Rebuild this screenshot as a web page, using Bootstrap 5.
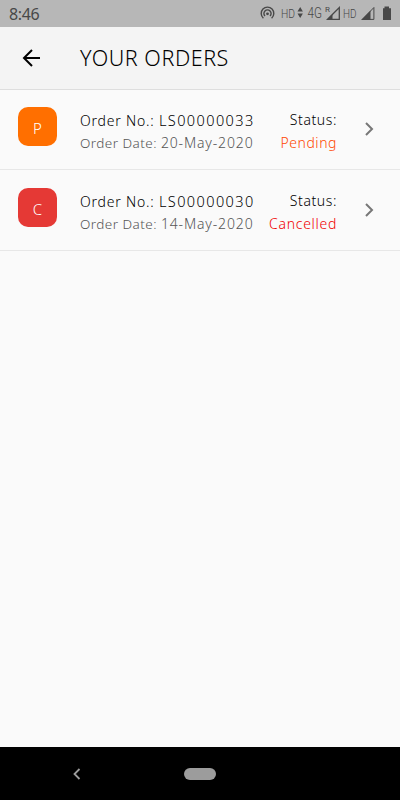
<!DOCTYPE html>
<html lang="en">
<head>
<meta charset="utf-8">
<meta name="viewport" content="width=device-width, initial-scale=1">
<title>Your Orders</title>
<link href="https://cdn.jsdelivr.net/npm/bootstrap@5.3.0/dist/css/bootstrap.min.css" rel="stylesheet">
<style>
body{background:#fafafa;font-family:"Noto Sans","Open Sans",sans-serif;font-weight:300;color:#000;height:800px;overflow:hidden}
.statusbar{height:27px;background:#b7b7b7;color:#484848;padding:0 9px;font-family:Roboto,sans-serif;font-weight:400}
.clock{font-size:16px;line-height:28px;font-family:"Noto Sans",sans-serif;letter-spacing:-.4px}
.appbar{height:63px;background:#f4f4f4;border-bottom:1px solid #dedede;padding-left:20px}
.appbar h1{font-size:21.5px;font-weight:300;line-height:26px;margin-left:38px;letter-spacing:.55px;color:#000}
.order{height:81px;border-bottom:1px solid #e7e7e7;padding:1px 20px 0 18px}
.order:first-child{height:80px;padding-top:0}
.tile{width:39px;height:39px;border-radius:10px;color:#fff;font-size:15px;margin-top:17px;padding-top:3px}
.tile-p{background:#ff6f00}
.tile-c{background:#e53935}
.lines{font-size:14px;line-height:22px;white-space:nowrap;margin-top:19px}
.info{width:178px;margin-left:23px}
.num{letter-spacing:.8px}
.digits{font-size:14.5px;letter-spacing:1.4px}
.date{color:#555;font-size:13.5px;letter-spacing:.45px}
.date .digits{font-size:14px;letter-spacing:.85px}
.pending{color:#ff4800;letter-spacing:.55px;line-height:24px}
.cancelled{color:#f00000;letter-spacing:.7px;line-height:24px}
.state{width:79px;letter-spacing:.6px}
.chev{margin-top:27.5px}
.navkeys{height:53px;background:#000;padding-left:71px}
.home{width:32px;height:12px;background:#9c9c9c;margin-left:101px}
</style>
<script src="https://cdn.jsdelivr.net/npm/bootstrap@5.3.0/dist/js/bootstrap.bundle.min.js"></script>
</head>
<body class="d-flex flex-column">
<div class="statusbar d-flex justify-content-between flex-shrink-0">
  <span class="clock">8:46</span>
  <svg width="135" height="27" viewBox="256 0 135 27" fill="#484848">
    <g fill="none" stroke="#484848" stroke-width="1.4"><path d="M263.400 18.200A6.300 6.300 0 1 1 271.600 18.200M265 16.100A3.600 3.600 0 1 1 270 16.100"/></g>
    <circle cx="267.500" cy="13.800" r="1.400"/>
    <text x="281" y="17.800" font-size="13.500" textLength="14" lengthAdjust="spacingAndGlyphs" font-weight="300">HD</text>
    <path d="M300.200 7l2.700 4.500h-5.400zM300.200 18l2.700-4.500h-5.400z"/>
    <text x="307.500" y="18.300" font-size="14" textLength="14.500" lengthAdjust="spacingAndGlyphs" font-weight="300">4G</text>
    <text x="325" y="11.500" font-size="8">R</text>
    <path d="M327.600 19.300L339.300 7.500V19.300z" fill="none" stroke="#484848" stroke-width="1.300"/><path d="M327 20l5.500-5.500V20z"/>
    <text x="343" y="17.800" font-size="13.500" textLength="13.500" lengthAdjust="spacingAndGlyphs" font-weight="300">HD</text>
    <path d="M362.500 19.400L373.900 7.500V19.400z" fill="none" stroke="#484848" stroke-width="1"/><path d="M361 20l9.500-9.500V20z"/>
    <path d="M384.500 6.500h4.500v1.700h2v11.800h-8V8.200h1.500z"/>
  </svg>
</div>
<header class="appbar d-flex align-items-center flex-shrink-0">
  <svg width="22" height="22" viewBox="0 0 22 22" fill="none" stroke="#000" stroke-width="2"><path d="M20 11H4M12 3L4 11l8 8"/></svg>
  <h1 class="mb-0">YOUR ORDERS</h1>
</header>
<main class="flex-grow-1">
  <div class="order d-flex align-items-start">
    <div class="tile tile-p d-flex align-items-center justify-content-center">P</div>
    <div class="lines info"><div class="num">Order No.: <span class="digits">LS00000033</span></div><div class="date">Order Date: <span class="digits">20-May-2020</span></div></div>
    <div class="lines state text-end"><div>Status:</div><div class="pending">Pending</div></div>
    <svg class="chev ms-auto" width="22" height="22" viewBox="0 0 22 22" fill="none" stroke="#777" stroke-width="2"><path d="M8 5l6 6-6 6"/></svg>
  </div>
  <div class="order d-flex align-items-start">
    <div class="tile tile-c d-flex align-items-center justify-content-center">C</div>
    <div class="lines info"><div class="num">Order No.: <span class="digits">LS00000030</span></div><div class="date">Order Date: <span class="digits">14-May-2020</span></div></div>
    <div class="lines state text-end"><div>Status:</div><div class="cancelled">Cancelled</div></div>
    <svg class="chev ms-auto" width="22" height="22" viewBox="0 0 22 22" fill="none" stroke="#777" stroke-width="2"><path d="M8 5l6 6-6 6"/></svg>
  </div>
</main>
<nav class="navkeys d-flex align-items-center flex-shrink-0">
  <svg width="12" height="14" viewBox="0 0 12 14" fill="none" stroke="#9c9c9c" stroke-width="1.8"><path d="M8.500 2L3.500 7l5 5"/></svg>
  <div class="home rounded-pill"></div>
</nav>
</body>
</html>
